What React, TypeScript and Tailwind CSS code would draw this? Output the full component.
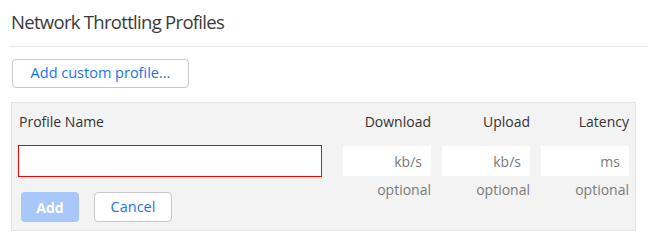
export default function App() {
  const cols = [
    { label: "Download", unit: "kb/s" },
    { label: "Upload", unit: "kb/s" },
    { label: "Latency", unit: "ms" },
  ];

  return (
    <div className="w-[648px] h-[246px] bg-white font-['Open_Sans',sans-serif] text-[#333]">
      {/* Title */}
      <div className="ml-[9px] pl-[2px] pt-[8px] pb-[10px] border-b border-[#e8e8e8]">
        <h1 className="text-[18.5px] tracking-[-0.7px] leading-[28px] font-normal text-[#3a3a3a]">
          Network Throttling Profiles
        </h1>
      </div>

      <div className="pl-[12px] pt-[12px]">
        <button className="w-[177px] h-[29px] rounded-[4px] border border-[#c8c8c8] bg-white text-[14.5px] font-medium text-[#1a73e8] leading-none">
          Add custom profile...
        </button>
      </div>

      {/* Editor */}
      <div className="mt-[14px] ml-[11px] w-[625px] border border-[#e6e6e6] bg-[#f3f3f3] px-[6px] pt-[9px] pb-[8px]">
        <div className="grid grid-cols-[1fr_88px_88px_88px] gap-x-[11px] text-[14px]">
          <div className="pl-[1px] leading-[20px] mb-[13px]">Profile Name</div>
          {cols.map((c) => (
            <div key={c.label} className="text-right leading-[20px] mb-[13px]">
              {c.label}
            </div>
          ))}

          <div>
            <input
              className="block w-[304px] h-[32px] border border-[#f00] bg-white outline-none px-2 text-[14px]"
              defaultValue=""
            />
            <div className="flex gap-[15px] mt-[15px] ml-[3px]">
              <button className="w-[58px] h-[30px] rounded-[4px] bg-[#a8c7fa] text-white font-bold text-[14px]">
                Add
              </button>
              <button className="w-[78px] h-[30px] rounded-[4px] border border-[#c8c8c8] bg-white text-[#1a73e8] font-medium text-[14.5px]">
                Cancel
              </button>
            </div>
          </div>
          {cols.map((c) => (
            <div key={c.unit + c.label} className="text-right">
              <input
                className="block w-full h-[30px] mt-[1px] bg-white outline-none px-[9px] text-right text-[14px] placeholder:text-[#7a7a7a]"
                placeholder={c.unit}
              />
              <div className="mt-[4px] leading-[20px] text-[#7a7a7a]">optional</div>
            </div>
          ))}
        </div>
      </div>
    </div>
  );
}
